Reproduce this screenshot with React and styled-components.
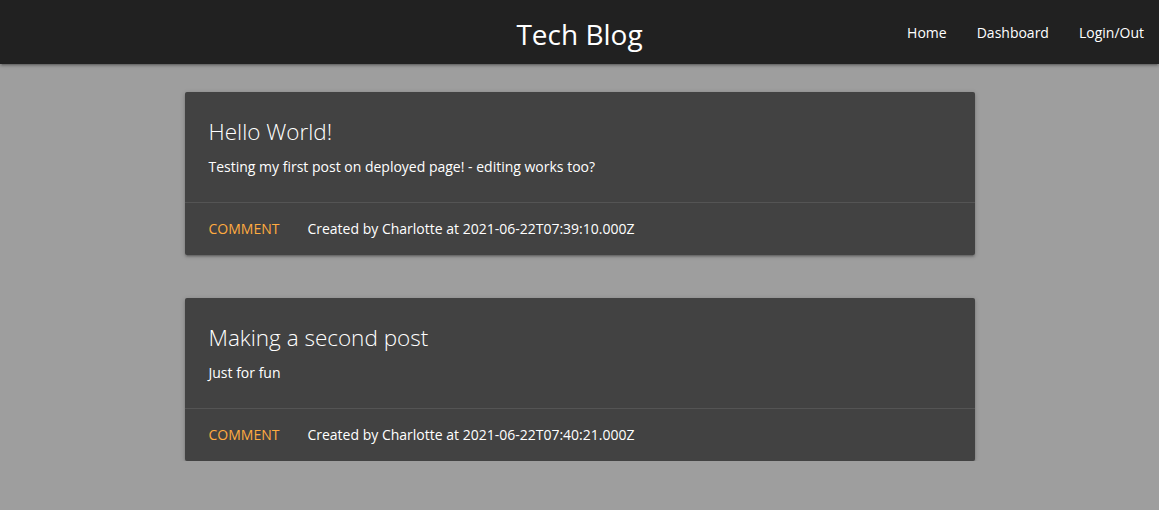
import styled, { createGlobalStyle } from "styled-components";

const GlobalStyle = createGlobalStyle`
  html, body {
    margin: 0;
    padding: 0;
    background: #9e9e9e;
    font-family: "Segoe UI", "Open Sans", "Noto Sans", sans-serif;
    font-size: 14px;
    color: #fff;
  }
  * { box-sizing: border-box; }
`;

const posts = [
  {
    id: 1,
    title: "Hello World!",
    body: "Testing my first post on deployed page! - editing works too?",
    author: "Charlotte",
    created: "2021-06-22T07:39:10.000Z",
  },
  {
    id: 2,
    title: "Making a second post",
    body: "Just for fun",
    author: "Charlotte",
    created: "2021-06-22T07:40:21.000Z",
  },
];

export default function App() {
  return (
    <>
      <GlobalStyle />
      <NavBar>
        <span />
        <Brand>Tech Blog</Brand>
        <NavLinks>
          <NavLink href="#">Home</NavLink>
          <NavLink href="#">Dashboard</NavLink>
          <NavLink href="#">Login/Out</NavLink>
        </NavLinks>
      </NavBar>

      <Main>
        {posts.map((post) => (
          <Card key={post.id}>
            <CardContent>
              <CardTitle>{post.title}</CardTitle>
              <CardText>{post.body}</CardText>
            </CardContent>
            <CardAction>
              <ActionLink href="#">Comment</ActionLink>
              <span>
                Created by {post.author} at {post.created}
              </span>
            </CardAction>
          </Card>
        ))}
      </Main>
    </>
  );
}

// Componentes estilizados
const NavBar = styled.nav`
  display: grid;
  grid-template-columns: 1fr auto 1fr;
  align-items: center;
  height: 64px;
  background-color: #212121;
  box-shadow: 0 2px 2px 0 rgba(0, 0, 0, 0.14), 0 3px 1px -2px rgba(0, 0, 0, 0.12),
    0 1px 5px 0 rgba(0, 0, 0, 0.2);
`;

const Brand = styled.a`
  font-size: 28px;
  color: #fff;
  line-height: 64px;
  padding-top: 2px;
`;

const NavLinks = styled.div`
  display: flex;
  justify-content: flex-end;
  height: 64px;
  padding-right: 1px;
`;

const NavLink = styled.a`
  display: block;
  padding: 0 14px 0 16px;
  line-height: 64px;
  color: #fff;
  text-decoration: none;
  font-size: 14px;
`;

const Main = styled.main`
  width: 790px;
  margin: 0 auto;
  padding-top: 28px;
  display: flex;
  flex-direction: column;
  gap: 43px;
`;

const Card = styled.div`
  background-color: #424242;
  border-radius: 2px;
  box-shadow: 0 2px 2px 0 rgba(0, 0, 0, 0.14), 0 3px 1px -2px rgba(0, 0, 0, 0.12),
    0 1px 5px 0 rgba(0, 0, 0, 0.2);
`;

const CardContent = styled.div`
  padding: 24px;
`;

const CardTitle = styled.span`
  display: block;
  font-size: 22.5px;
  font-weight: 300;
  line-height: 32px;
  margin-bottom: 8px;
`;

const CardText = styled.p`
  margin: 0;
  line-height: 22px;
`;

const CardAction = styled.div`
  border-top: 1px solid rgba(160, 160, 160, 0.2);
  padding: 16px 24px;
  line-height: 20px;
`;

const ActionLink = styled.a`
  color: #ffab40;
  text-transform: uppercase;
  text-decoration: none;
  margin-right: 28px;
`;
